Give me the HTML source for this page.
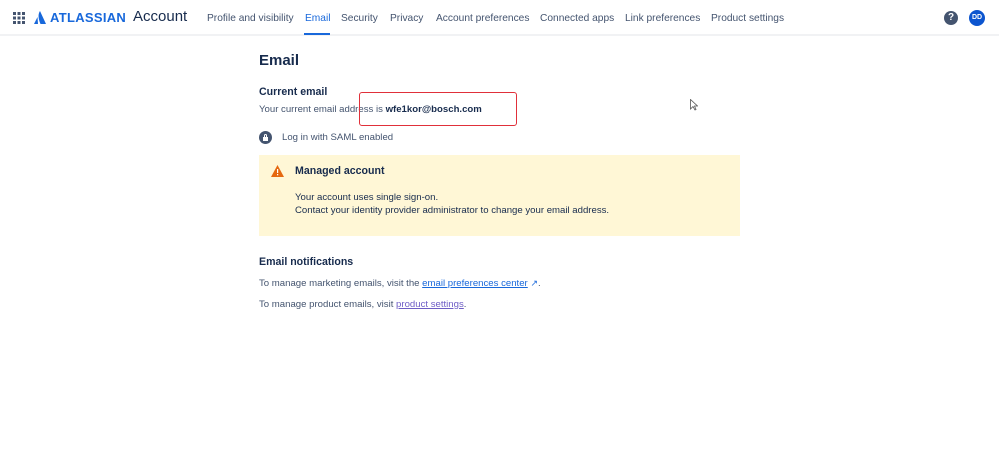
<!DOCTYPE html>
<html><head><style>
*{margin:0;padding:0;box-sizing:border-box}
body{width:999px;height:452px;background:#fff;font-family:"Liberation Sans",sans-serif;color:#172b4d;position:relative;overflow:hidden}
.a{position:absolute;white-space:nowrap}
.nav{font-size:10.2px;color:#44546f;top:13px}
.hdr{position:absolute;left:0;top:0;width:999px;height:36px;border-bottom:2px solid #f1f2f4}
.t{font-size:9.6px}
.h{font-size:10.6px;font-weight:bold}
</style></head><body>
<div class="hdr"></div>
<svg class="a" style="left:13px;top:12px" width="12" height="12" viewBox="0 0 12 12" fill="#44546f">
<rect x="0" y="0" width="3" height="3"/><rect x="4.5" y="0" width="3" height="3"/><rect x="9" y="0" width="3" height="3"/>
<rect x="0" y="4.5" width="3" height="3"/><rect x="4.5" y="4.5" width="3" height="3"/><rect x="9" y="4.5" width="3" height="3"/>
<rect x="0" y="9" width="3" height="3"/><rect x="4.5" y="9" width="3" height="3"/><rect x="9" y="9" width="3" height="3"/></svg>
<svg class="a" style="left:34px;top:11px" width="12" height="13" viewBox="0 0 12 13"><path d="M3.5 6 L0 13 L4 13 Z M6 0 C4 3 4 7 6.5 13 L12 13 Z" fill="#1868db"/></svg>
<div class="a" style="left:50px;top:10px;font-size:13px;font-weight:bold;color:#1868db;letter-spacing:0.3px">ATLASSIAN</div>
<div class="a" style="left:133px;top:8px;font-size:15px;color:#172b4d">Account</div>
<div class="a nav" style="left:207px">Profile and visibility</div>
<div class="a nav" style="left:305px;color:#1868db">Email</div>
<div class="a" style="left:304px;top:33px;width:26px;height:2px;background:#1868db"></div>
<div class="a nav" style="left:341px">Security</div>
<div class="a nav" style="left:390px">Privacy</div>
<div class="a nav" style="left:436px">Account preferences</div>
<div class="a nav" style="left:540px">Connected apps</div>
<div class="a nav" style="left:625px">Link preferences</div>
<div class="a nav" style="left:711px">Product settings</div>
<div class="a" style="left:944px;top:11px;width:14px;height:14px;border-radius:50%;background:#44546f;color:#fff;font-size:10px;font-weight:bold;text-align:center;line-height:14px">?</div>
<div class="a" style="left:969px;top:10px;width:16px;height:16px;border-radius:50%;background:#0c55cf;color:#fff;font-size:7px;font-weight:bold;text-align:center;line-height:16px">DD</div>

<div class="a" style="left:259px;top:52px;font-size:15px;font-weight:bold">Email</div>
<div class="a h" style="left:259px;top:86px">Current email</div>
<div class="a t" style="left:259px;top:104px;color:#44546f">Your current email address is <b style="color:#172b4d">wfe1kor@bosch.com</b></div>
<div class="a" style="left:359px;top:92px;width:158px;height:34px;border:1.5px solid #e0303a;border-radius:3px"></div>
<div class="a" style="left:259px;top:131px;width:13px;height:13px;border-radius:50%;background:#44546f"></div>
<div class="a" style="left:263px;top:137px;width:5px;height:4px;background:#fff"></div>
<div class="a" style="left:264px;top:134px;width:3px;height:4px;border:1px solid #fff;border-bottom:none;border-radius:2px 2px 0 0"></div>
<div class="a t" style="left:282px;top:132px;color:#44546f">Log in with SAML enabled</div>
<div class="a" style="left:259px;top:155px;width:481px;height:81px;background:#fff7d6"></div>
<svg class="a" style="left:271px;top:165px" width="13" height="12" viewBox="0 0 13 12"><path d="M6.5 0 L13 12 L0 12 Z" fill="#e56910"/><rect x="6" y="4" width="1.2" height="4" fill="#fff"/><rect x="6" y="9" width="1.2" height="1.3" fill="#fff"/></svg>
<div class="a h" style="left:295px;top:165px">Managed account</div>
<div class="a t" style="left:295px;top:192px">Your account uses single sign-on.</div>
<div class="a t" style="left:295px;top:205px">Contact your identity provider administrator to change your email address.</div>
<div class="a h" style="left:259px;top:256px">Email notifications</div>
<div class="a t" style="left:259px;top:278px;color:#44546f">To manage marketing emails, visit the <span style="color:#1868db;text-decoration:underline">email preferences center</span> <span style="color:#1868db;font-size:9px">&#8599;</span>.</div>
<div class="a t" style="left:259px;top:299px;color:#44546f">To manage product emails, visit <span style="color:#6e5dc6;text-decoration:underline">product settings</span>.</div>
<svg class="a" style="left:690px;top:99px" width="8" height="12" viewBox="0 0 8 12"><path d="M0.5 0.5 L0.5 10 L3 7.5 L5 11 L6 10.5 L4.5 7 L7.5 7 Z" fill="#fff" stroke="#555" stroke-width="0.8"/></svg>
</body></html>
